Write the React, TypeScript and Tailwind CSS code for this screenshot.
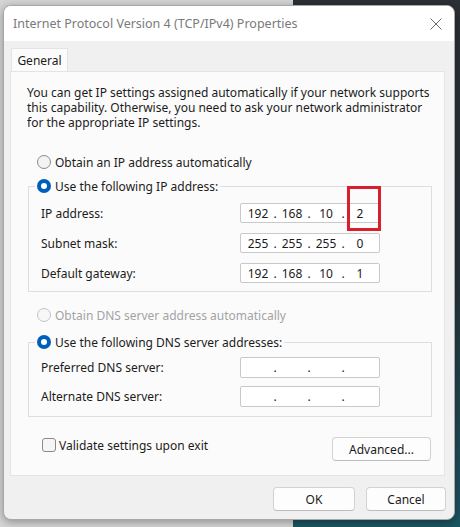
import React from "react"

const font = { fontFamily: '"Noto Sans", "Open Sans", sans-serif' }

function Radio({ checked, disabled, label }: { checked?: boolean; disabled?: boolean; label: string }) {
    return (
        <div className="flex items-center gap-[4px] h-[16px]">
            {checked ? (
                <span className="w-[14px] h-[14px] rounded-full bg-[#005fb8] flex items-center justify-center">
                    <span className="w-[6px] h-[6px] rounded-full bg-white" />
                </span>
            ) : (
                <span
                    className={`w-[14px] h-[14px] rounded-full border ${disabled ? "border-[#c4c4c4] bg-[#f7f7f7]" : "border-[#8a8a8a] bg-[#f3f3f3]"}`}
                />
            )}
            <span className={disabled ? "text-[#a3a3a3]" : "text-[#1b1b1b]"}>{label}</span>
        </div>
    )
}

function IpBox({ parts, tall }: { parts: string[]; tall?: boolean }) {
    return (
        <div
            className={`w-[140px] ${tall ? "h-[21px]" : "h-[20px]"} bg-white border border-[#c9c9c9] rounded-[2px] flex items-center pl-[1px] text-[#1b1b1b]`}
        >
            {parts.map((p, i) => (
                <React.Fragment key={i}>
                    <span className="w-[32px] text-center">{p}</span>
                    {i < 3 && <span className="w-[2px] flex justify-center">.</span>}
                </React.Fragment>
            ))}
        </div>
    )
}

function Row({ label, parts, tall }: { label: string; parts: string[]; tall?: boolean }) {
    return (
        <div className="flex items-center">
            <span className="w-[199px] text-[#1b1b1b]">{label}</span>
            <IpBox parts={parts} tall={tall} />
        </div>
    )
}

function Button({ children, className }: { children: React.ReactNode; className?: string }) {
    return (
        <div
            className={`h-[24px] flex items-center justify-center bg-[#fdfdfd] border border-[#d2d2d2] border-b-[#bdbdbd] rounded-[4px] text-[#1b1b1b] ${className ?? ""}`}
        >
            {children}
        </div>
    )
}

export default function App() {
    return (
        <div className="relative w-[460px] h-[527px] overflow-hidden flex text-[12px] leading-[15px]" style={font}>
            {/* DESKTOP BEHIND THE DIALOG */}
            <div className="w-[293px] bg-[#d6d6d6]" />
            <div className="flex-1 bg-gradient-to-b from-[#2c3037] via-[#243039] to-[#1a5561]" />

            {/* DIALOG WINDOW */}
            <div className="absolute left-[3px] top-[5px] w-[452px] h-[515px] flex flex-col rounded-[8px] border border-[#a8a8a8] bg-[#f0f0f0] overflow-hidden shadow-[0_2px_10px_rgba(0,0,0,0.35)]">
                {/* TITLE BAR */}
                <div className="h-[35px] bg-white flex items-center justify-between pl-[9px]">
                    <span className="text-[12.5px] text-[#7a7a7a]">Internet Protocol Version 4 (TCP/IPv4) Properties</span>
                    <div className="w-[36px] h-full flex items-center justify-center">
                        <svg width="12" height="12" viewBox="0 0 12 12">
                            <path d="M0.5 0.5 L11.5 11.5 M11.5 0.5 L0.5 11.5" stroke="#6b6b6b" strokeWidth="1" fill="none" />
                        </svg>
                    </div>
                </div>

                {/* BODY */}
                <div className="flex-1 flex flex-col pl-[6px] pr-[9px] pt-[7px]">
                    <div className="ml-[1px] w-[57px] h-[23px] bg-[#fbfbfb] border border-b-0 border-[#e4e4e4] flex items-center justify-center text-[#1b1b1b]">
                        General
                    </div>
                    <div className="h-[405px] bg-[#fbfbfb] border border-[#e4e4e4] flex flex-col">
                        <div className="pl-[16px] pt-[13px] whitespace-nowrap text-[#1b1b1b]">
                            <div className="h-[15px]">You can get IP settings assigned automatically if your network supports</div>
                            <div className="h-[15px]">this capability. Otherwise, you need to ask your network administrator</div>
                            <div className="h-[15px]">for the appropriate IP settings.</div>
                        </div>

                        <div className="ml-[26px] mt-[24px]">
                            <Radio label="Obtain an IP address automatically" />
                        </div>

                        <fieldset className="ml-[17px] mr-[12px] mt-[8px] border border-[#dedede] px-[6px] pb-[8px]">
                            <legend className="px-[2px] bg-[#fbfbfb]">
                                <Radio checked label="Use the following IP address:" />
                            </legend>
                            <div className="pl-[6px] pt-[9px] flex flex-col gap-[10px]">
                                <Row label="IP address:" parts={["192", "168", "10", "2"]} />
                                <Row label="Subnet mask:" parts={["255", "255", "255", "0"]} />
                                <Row label="Default gateway:" parts={["192", "168", "10", "1"]} />
                            </div>
                        </fieldset>

                        <div className="ml-[26px] mt-[15px]">
                            <Radio disabled label="Obtain DNS server address automatically" />
                        </div>

                        <fieldset className="ml-[17px] mr-[12px] mt-[11px] border border-[#dedede] px-[6px] pb-[9px]">
                            <legend className="px-[2px] bg-[#fbfbfb]">
                                <Radio checked label="Use the following DNS server addresses:" />
                            </legend>
                            <div className="pl-[6px] pt-[7px] flex flex-col gap-[8px]">
                                <Row label="Preferred DNS server:" parts={["", "", "", ""]} tall />
                                <Row label="Alternate DNS server:" parts={["", "", "", ""]} tall />
                            </div>
                        </fieldset>

                        <div className="ml-[31px] mr-[13px] mt-[20px] flex items-start justify-between">
                            <div className="flex items-center gap-[3px] h-[14px] mt-[1px]">
                                <span className="w-[14px] h-[14px] rounded-[3px] border border-[#8a8a8a] bg-[#f6f6f6]" />
                                <span className="text-[#1b1b1b]">Validate settings upon exit</span>
                            </div>
                            <Button className="w-[99px]">Advanced...</Button>
                        </div>
                    </div>

                    {/* OK / CANCEL */}
                    <div className="mt-[11px] flex justify-end gap-[11px] -mr-[1px]">
                        <Button className="w-[82px]">OK</Button>
                        <Button className="w-[80px]">Cancel</Button>
                    </div>
                </div>
            </div>

            {/* RED HIGHLIGHT OVER THE LAST OCTET */}
            <div className="absolute left-[347px] top-[186px] w-[34px] h-[45px] border-[3px] border-[#d7202b]" />
        </div>
    )
}
